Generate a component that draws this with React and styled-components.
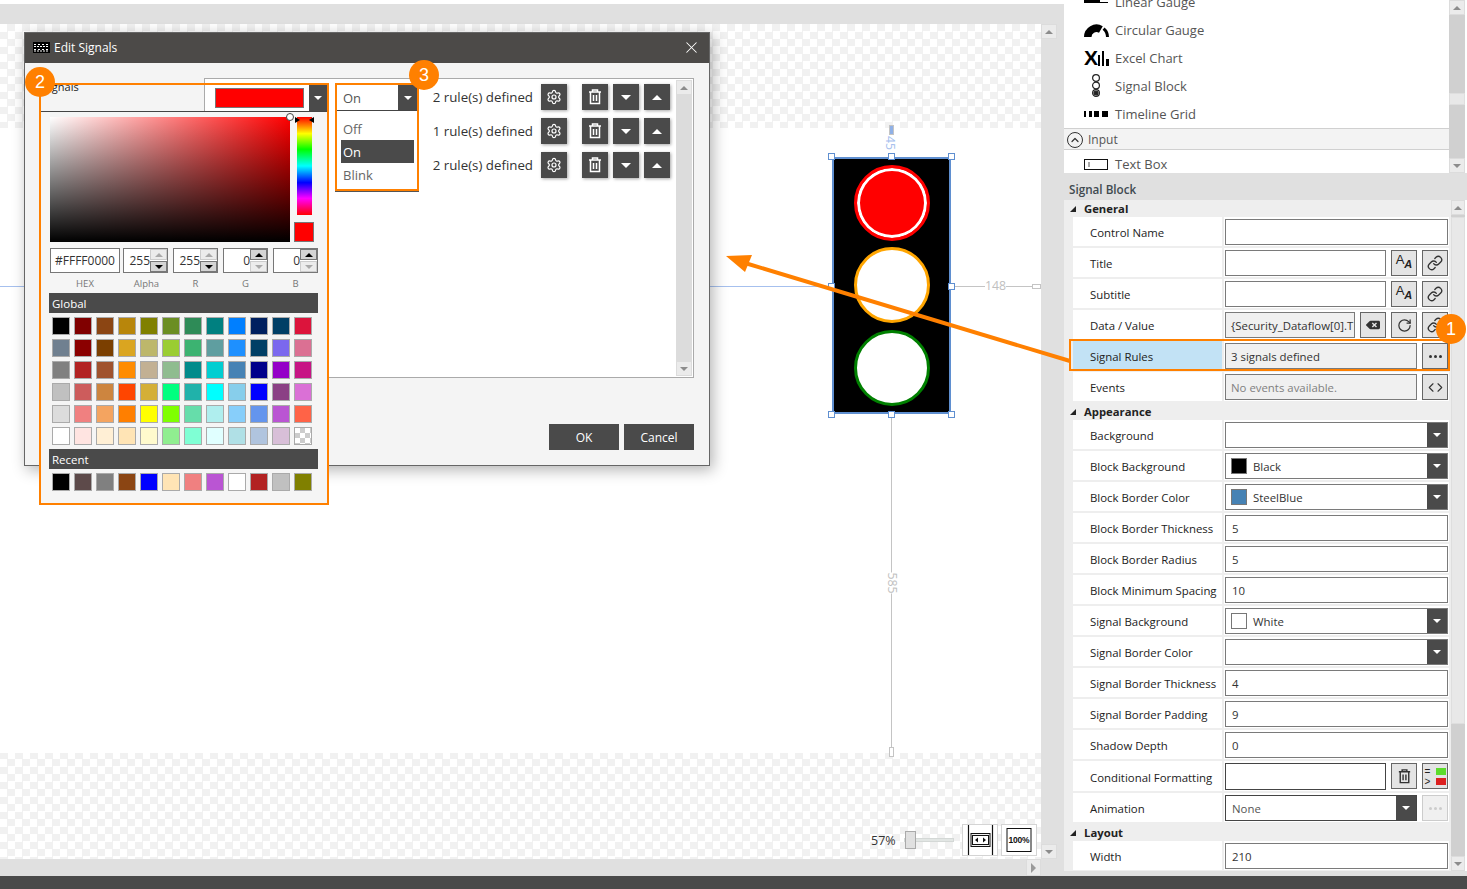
import React from 'react';
import styled, {createGlobalStyle} from 'styled-components';
import {Settings, Link, RotateCw, Code, ChevronUp, X} from 'lucide-react';
import {FaBackspace} from 'react-icons/fa';

const ORANGE = '#ff8000';
const DARK = '#4a4a4a';
const FONT = '"Open Sans", "Noto Sans", sans-serif';

const GlobalStyle = createGlobalStyle`
    html, body { margin: 0; padding: 0; background: #fff; }
    body { font-family: ${FONT}; font-size: 11.4px; color: #222; overflow: hidden; }
    * { box-sizing: border-box; }
`;

const checker = `repeating-conic-gradient(#f1f1f1 0 25%, #fff 0 50%) 0 0 / 15px 15px`;

const Page = styled.div`
    position: relative;
    width: 1467px;
    height: 889px;
    display: flex;
    flex-direction: column;
    overflow: hidden;
`;
const Workspace = styled.div`
    display: flex;
    height: 876px;
`;
const Footer = styled.div`
    height: 13px;
    background: ${DARK};
`;

/* left designer area */
const LeftPane = styled.div`
    width: 1064px;
    background: #e0e0e0;
    border-top: 4px solid #fff;
    padding-top: 20px;
    display: grid;
    grid-template-columns: 1041px 16px;
    grid-template-rows: 835px 17px;
`;
const Canvas = styled.div`
    position: relative;
    overflow: hidden;
    background: ${checker};
    padding-top: 104px;
`;
const Sheet = styled.div`
    height: 625px;
    background: #fff;
`;
const HLine = styled.div`
    position: absolute;
    left: ${p => p.$x}px;
    top: ${p => p.$y}px;
    width: ${p => p.$w}px;
    height: 1px;
    background: ${p => p.$color};
`;
const VLine = styled.div`
    position: absolute;
    left: ${p => p.$x}px;
    top: ${p => p.$y}px;
    width: 1px;
    height: ${p => p.$h}px;
    background: #c4c4c4;
`;
const Cap = styled.div`
    position: absolute;
    left: ${p => p.$x}px;
    top: ${p => p.$y}px;
    width: ${p => p.$w}px;
    height: ${p => p.$h}px;
    border: 1px solid #c4c4c4;
    background: ${p => p.$fill || '#fff'};
`;
const Measure = styled.span`
    position: absolute;
    left: ${p => p.$x}px;
    top: ${p => p.$y}px;
    font-size: 12.3px;
    line-height: 14px;
    color: ${p => p.$color || '#c0c0c0'};
    background: #fff;
    transform: ${p => (p.$turn ? `rotate(${p.$turn}deg)` : 'none')};
`;
const SignalBlock = styled.div`
    position: absolute;
    left: 832px;
    top: 133px;
    width: 119px;
    height: 257px;
    background: #000;
    border: 2px solid #5f8fd0;
    padding-top: 6px;
    display: flex;
    flex-direction: column;
    align-items: center;
    gap: 6px;
`;
const Lamp = styled.div`
    width: 76px;
    height: 76px;
    margin-top: ${p => p.$nudge || 0}px;
    border-radius: 50%;
    background: ${p => p.$fill};
    border: 3px solid ${p => p.$ring};
    box-shadow: ${p => (p.$inner ? `inset 0 0 0 3px ${p.$inner}` : 'none')};
`;
const Handle = styled.div`
    position: absolute;
    left: ${p => p.$x}px;
    top: ${p => p.$y}px;
    width: 7px;
    height: 7px;
    background: #fff;
    border: 1px solid #5f8fd0;
`;
const ZoomBar = styled.div`
    position: absolute;
    left: 871px;
    top: 800px;
    display: flex;
    align-items: center;
    height: 32px;
`;
const ZoomLabel = styled.span`
    width: 33px;
    font-size: 12.5px;
    color: #333;
`;
const SliderTrack = styled.div`
    position: relative;
    width: 50px;
    height: 4px;
    background: #e2e6e4;
    border: 1px solid #d4d8d6;
    margin-right: 8px;
`;
const SliderThumb = styled.div`
    position: absolute;
    left: 0;
    top: -8px;
    width: 11px;
    height: 18px;
    background: #e0e0e0;
    border: 1px solid #aaa;
`;
const ZoomButton = styled.div`
    width: 36px;
    height: 32px;
    margin-right: 3px;
    background: #fff;
    border: 1px solid #d4d4d4;
    display: flex;
    align-items: center;
    justify-content: center;
    position: relative;
`;
const HundredText = styled.span`
    position: absolute;
    left: 0;
    right: 0;
    top: 9px;
    text-align: center;
    font-family: "Liberation Sans", sans-serif;
    font-size: 8.5px;
    line-height: 12px;
    font-weight: 700;
    letter-spacing: -0.2px;
    color: #111;
`;

/* scrollbars */
const ScrollBar = styled.div`
    display: flex;
    flex-direction: ${p => (p.$horizontal ? 'row' : 'column')};
    justify-content: ${p => (p.$horizontal ? 'flex-end' : 'flex-start')};
    width: ${p => (p.$horizontal ? 'auto' : `${p.$size || 16}px`)};
    background: ${p => p.$track || '#d0d0d0'};
    flex-shrink: 0;
`;
const ScrollArrow = styled.div`
    width: ${p => (p.$horizontal ? '15px' : 'auto')};
    height: ${p => (p.$horizontal ? 'auto' : '15px')};
    background: #ebebeb;
    border: 1px solid #dcdcdc;
    display: flex;
    align-items: center;
    justify-content: center;
    flex-shrink: 0;
`;
const ScrollThumb = styled.div`
    margin-top: ${p => p.$top}px;
    height: ${p => p.$height}px;
    background: #e8e8e8;
    border: 1px solid #dedede;
`;
const ScrollFill = styled.div`
    flex: 1;
`;
const Tri = styled.span`
    display: block;
    width: 0;
    height: 0;
    border-left: ${p => p.$size || 4}px solid transparent;
    border-right: ${p => p.$size || 4}px solid transparent;
    ${p => (p.$up ? 'border-bottom' : 'border-top')}: ${p => (p.$size || 4)}px solid ${p => p.$color || '#8c8c8c'};
`;
const TriRight = styled.span`
    display: block;
    width: 0;
    height: 0;
    border-top: 5px solid transparent;
    border-bottom: 5px solid transparent;
    border-left: 5px solid #9a9a9a;
`;

/* right panels */
const RightPane = styled.div`
    width: 403px;
    background: #e0e0e0;
    display: flex;
    flex-direction: column;
`;
const Toolbox = styled.div`
    height: 173px;
    display: flex;
    background: #fff;
    padding-right: 2px;
`;
const ToolList = styled.div`
    width: 385px;
    overflow: hidden;
`;
const ToolListInner = styled.div`
    margin-top: -12px;
`;
const ToolRow = styled.div`
    height: 28px;
    padding-left: 20px;
    display: flex;
    align-items: center;
    font-size: 13px;
    color: #555;
`;
const ToolIcon = styled.span`
    width: 31px;
    padding-left: ${p => p.$indent || 0}px;
    display: flex;
    align-items: center;
    font-family: "Liberation Sans", sans-serif;
    font-size: 21px;
    font-weight: 700;
    color: #000;
`;
const GroupRow = styled.div`
    height: 22px;
    padding: 1px 0 0 3px;
    background: #f3f3f3;
    border-top: 1px solid #d0d0d0;
    border-bottom: 1px solid #d0d0d0;
    display: flex;
    align-items: center;
    gap: 5px;
    font-size: 12px;
    color: #555;
`;
const CircleUp = styled.span`
    width: 16px;
    height: 16px;
    border: 1px solid #333;
    border-radius: 50%;
    display: flex;
    align-items: center;
    justify-content: center;
    color: #333;
`;
const PanelTitle = styled.div`
    height: 27px;
    padding: 4px 0 0 5px;
    display: flex;
    align-items: center;
    font-size: 11.7px;
    font-weight: 600;
    color: #404a50;
`;
const PropArea = styled.div`
    height: 671px;
    display: flex;
    background: #fff;
`;
const PropGrid = styled.div`
    width: 387px;
    padding-right: 2px;
    background: #eee;
    overflow: hidden;
`;
const Section = styled.div`
    height: 17px;
    display: flex;
    align-items: center;
    padding-left: 6px;
    gap: 8px;
    font-size: 11.3px;
    font-weight: 700;
    color: #222;
`;
const SectionMark = styled.span`
    width: 0;
    height: 0;
    border-left: 6px solid transparent;
    border-bottom: 6px solid #222;
`;
const PropRow = styled.div`
    height: ${p => (p.$tall ? 30 : 29)}px;
    margin-bottom: 2px;
    margin-left: 9px;
    display: flex;
    background: #eee;
`;
const PropLabel = styled.div`
    width: 149px;
    margin-right: 2px;
    padding: 2px 0 0 17px;
    display: flex;
    align-items: center;
    background: ${p => (p.$active ? '#c2e2f5' : '#fff')};
    color: #222;
    white-space: nowrap;
`;
const PropValue = styled.div`
    flex: 1;
    background: #fff;
    padding: 2px 1px 1px 1px;
    display: flex;
    gap: 5px;
`;
const Field = styled.div`
    flex: 1;
    min-width: 0;
    height: ${p => (p.$tall ? 27 : 26)}px;
    padding-left: ${p => (p.$inset ? 5 : 6)}px;
    border: 1px solid ${p => (p.$strong ? '#444' : '#7a7a7a')};
    background: ${p => p.$fill || '#fff'};
    color: ${p => p.$color || '#333'};
    display: flex;
    align-items: center;
    white-space: nowrap;
    overflow: hidden;
`;
const Swatch = styled.span`
    width: 16px;
    height: 16px;
    margin-right: 6px;
    flex-shrink: 0;
    background: ${p => p.$color};
    border: 1px solid #777;
`;
const SelectText = styled.span`
    flex: 1;
`;
const DropBtn = styled.span`
    width: ${p => p.$w || 20}px;
    height: 100%;
    flex-shrink: 0;
    background: ${DARK};
    display: flex;
    align-items: center;
    justify-content: center;
`;
const IconBtn = styled.div`
    width: 26px;
    height: 26px;
    flex-shrink: 0;
    background: ${p => (p.$disabled ? '#f0f0f0' : '#e4e4e4')};
    border: 1px solid ${p => (p.$disabled ? '#ccc' : '#666')};
    color: ${p => (p.$disabled ? '#ccc' : '#333')};
    display: flex;
    align-items: center;
    justify-content: center;
    gap: 2px;
`;
const Dot = styled.i`
    width: 3px;
    height: 3px;
    border-radius: 50%;
    background: currentColor;
`;
const GlyphPair = styled.span`
    display: flex;
    font-family: "Liberation Sans", sans-serif;
    color: #222;
`;
const BigA = styled.span`
    font-size: 13px;
    line-height: 13px;
    margin-top: -3px;
`;
const SmallA = styled.span`
    font-size: 11px;
    line-height: 11px;
    margin-top: 3px;
    font-style: italic;
    font-weight: 700;
`;
const RuleGrid = styled.div`
    display: grid;
    grid-template-columns: 9px 10px;
    column-gap: 2px;
    row-gap: 3px;
    align-items: center;
    font-family: "Liberation Sans", sans-serif;
    font-size: 10px;
    line-height: 7px;
    color: #222;
`;
const RuleChip = styled.i`
    height: 7px;
    background: ${p => p.$color};
`;

/* dialog */
const Dialog = styled.div`
    position: absolute;
    left: 24px;
    top: 32px;
    width: 686px;
    height: 434px;
    background: #f4f4f4;
    border: 1px solid #666;
    box-shadow: 3px 4px 14px rgba(0, 0, 0, 0.3);
`;
const DialogTitle = styled.div`
    height: 30px;
    background: #4c4a48;
    color: #fff;
    font-size: 12px;
    display: flex;
    align-items: center;
    padding: 0 8px 1px 8px;
    gap: 4px;
`;
const DialogTitleText = styled.span`
    flex: 1;
`;
const DialogBody = styled.div`
    padding: 15px 15px 0 18px;
`;
const TableRow = styled.div`
    display: flex;
`;
const SignalsLabel = styled.div`
    width: 161px;
    font-size: 11px;
    line-height: 18px;
    color: #222;
`;
const SignalsTable = styled.div`
    width: 490px;
    height: 300px;
    padding: 1px;
    background: #fff;
    border: 1px solid #aaa;
    display: flex;
`;
const SignalRows = styled.div`
    flex: 1;
    padding: 4px 6px 0 0;
    display: flex;
    flex-direction: column;
    gap: 8px;
`;
const SignalRow = styled.div`
    display: flex;
    justify-content: flex-end;
    align-items: center;
    height: 26px;
    gap: 5px;
`;
const RuleText = styled.span`
    font-size: 13.3px;
    color: #333;
    margin-right: 3px;
`;
const DarkBtn = styled.div`
    width: 26px;
    height: 26px;
    margin-right: ${p => p.$after || 0}px;
    background: ${DARK};
    color: #fff;
    display: flex;
    align-items: center;
    justify-content: center;
    box-shadow: 1px 1px 3px rgba(0, 0, 0, 0.35);
`;
const DialogFooter = styled.div`
    margin-top: 46px;
    display: flex;
    justify-content: flex-end;
    gap: 5px;
`;
const FooterBtn = styled.div`
    width: 70px;
    height: 26px;
    background: ${DARK};
    color: #fff;
    font-size: 12px;
    display: flex;
    align-items: center;
    justify-content: center;
`;

/* colour picker popup */
const PickerPopup = styled.div`
    position: absolute;
    left: 14px;
    top: 50px;
    width: 290px;
    height: 422px;
    border: 2px solid ${ORANGE};
    display: flex;
    flex-direction: column;
`;
const ColorCombo = styled.div`
    align-self: flex-end;
    width: 116px;
    height: 26px;
    padding: 3px 0 3px 4px;
    background: #fff;
    display: flex;
    flex-shrink: 0;
`;
const ComboColor = styled.div`
    width: 89px;
    background: #f00;
    border: 1px solid #777;
`;
const ComboDrop = styled.div`
    margin: -3px 0 -3px 5px;
    flex: 1;
    background: ${DARK};
    display: flex;
    align-items: center;
    justify-content: center;
`;
const PickerPanel = styled.div`
    flex: 1;
    background: #f5f5f5;
    border-top: 1px solid #444;
    padding: 5px 9px 0 8px;
`;
const PickerTop = styled.div`
    display: flex;
    gap: 4px;
    margin-left: 1px;
`;
const SvSquare = styled.div`
    width: 240px;
    height: 125px;
    background: linear-gradient(to bottom, rgba(0,0,0,0), #000), linear-gradient(to right, #fff, #f00);
    position: relative;
`;
const SvMarker = styled.span`
    position: absolute;
    right: -4px;
    top: -4px;
    width: 8px;
    height: 8px;
    border-radius: 50%;
    border: 1px solid #444;
    background: #fff;
`;
const HueCol = styled.div`
    width: 20px;
    display: flex;
    flex-direction: column;
    align-items: center;
    gap: 7px;
`;
const HueBar = styled.div`
    position: relative;
    width: 15px;
    height: 98px;
    background: linear-gradient(to bottom, #f00, #ff0 17%, #0f0 33%, #0ff 50%, #00f 67%, #f0f 83%, #f00);
`;
const HueMark = styled.span`
    position: absolute;
    top: 0;
    ${p => (p.$right ? 'right: -2px;' : 'left: -2px;')}
    width: 0;
    height: 0;
    border-top: 3px solid transparent;
    border-bottom: 3px solid transparent;
    ${p => (p.$right ? 'border-right' : 'border-left')}: 5px solid #000;
`;
const CurrentColor = styled.div`
    width: 20px;
    height: 20px;
    background: #f00;
    border: 1px solid #777;
`;
const ValueRow = styled.div`
    margin: 6px 0 0 1px;
    display: grid;
    grid-template-columns: 68px 45px 45px 45px 45px;
    column-gap: 5px;
    height: 25px;
`;
const ValueBox = styled.div`
    margin-right: ${p => (p.$wide ? -2 : 0)}px;
    border: 1px solid #777;
    background: #fff;
    display: flex;
    align-items: center;
    font-size: 12px;
    color: #333;
    overflow: hidden;
`;
const ValueText = styled.span`
    flex: 1;
    text-align: ${p => (p.$center ? 'center' : 'right')};
    white-space: nowrap;
`;
const Spin = styled.div`
    width: 17px;
    height: 100%;
    display: flex;
    flex-direction: column;
    gap: 1px;
    background: #fff;
`;
const SpinBtn = styled.div`
    flex: 1;
    background: ${p => (p.$on ? '#d4d4d4' : '#ececec')};
    border: 1px solid ${p => (p.$on ? '#777' : '#ccc')};
    display: flex;
    align-items: center;
    justify-content: center;
`;
const CaptionRow = styled.div`
    margin: 4px 0 0 1px;
    display: grid;
    grid-template-columns: 70px 43px 45px 45px 45px;
    column-gap: 5px;
    height: 16px;
    font-size: 9.5px;
    line-height: 13px;
    color: #777;
    text-align: center;
`;
const PaletteTitle = styled.div`
    height: 20px;
    padding-left: 3px;
    background: ${DARK};
    color: #fff;
    font-size: 11.5px;
    display: flex;
    align-items: center;
`;
const Palette = styled.div`
    margin: 4px 0 4px 3px;
    display: grid;
    grid-template-columns: repeat(12, 18px);
    grid-auto-rows: 18px;
    gap: 4px;
`;
const PaletteCell = styled.div`
    background: ${p => (p.$empty ? `repeating-conic-gradient(#ccc 0 25%, #fff 0 50%) 0 0 / 10px 10px` : p.$color)};
    border: 1px solid #aaa;
`;

/* state dropdown */
const StatePopup = styled.div`
    position: absolute;
    left: 310px;
    top: 50px;
    width: 84px;
    height: 108px;
    border: 2px solid ${ORANGE};
    background: #fff;
    box-shadow: 0 1px 0 #555;
    font-size: 13px;
    color: #555;
`;
const StateHead = styled.div`
    height: 26px;
    display: flex;
    align-items: center;
    padding-left: 6px;
    border-bottom: 1px solid #444;
`;
const StateHeadText = styled.span`
    flex: 1;
`;
const StateList = styled.div`
    padding: 6px 3px 0 4px;
`;
const StateItem = styled.div`
    height: 23px;
    padding-left: 2px;
    display: flex;
    align-items: center;
    background: ${p => (p.$on ? DARK : 'transparent')};
    color: ${p => (p.$on ? '#fff' : '#666')};
`;

/* callouts */
const Badge = styled.div`
    position: absolute;
    left: ${p => p.$x - 15}px;
    top: ${p => p.$y - 15}px;
    width: 30px;
    height: 30px;
    border-radius: 50%;
    background: ${ORANGE};
    color: #fff;
    font-family: "Liberation Sans", sans-serif;
    font-size: 18px;
    display: flex;
    align-items: center;
    justify-content: center;
`;
const RulesOutline = styled.div`
    position: absolute;
    left: 1069px;
    top: 339px;
    width: 381px;
    height: 32px;
    border: 2px solid ${ORANGE};
`;
const ArrowSvg = styled.svg`
    position: absolute;
    left: 0;
    top: 0;
    pointer-events: none;
`;

const GLOBAL_COLORS = [
    '#000000', '#800000', '#8b4513', '#b8860b', '#808000', '#6b8e23', '#2e8b57', '#008080', '#007fff', '#002060', '#003f66', '#dc143c',
    '#708090', '#8b0000', '#7b3f00', '#daa520', '#bdb76b', '#9acd32', '#3cb371', '#5f9ea0', '#1e90ff', '#003f66', '#7b68ee', '#db7093',
    '#808080', '#b22222', '#a0522d', '#ff8c00', '#c2b093', '#8fbc8f', '#008b8b', '#00ced1', '#4682b4', '#00008b', '#9400c8', '#c71585',
    '#c0c0c0', '#cd5c5c', '#cd853f', '#ff4500', '#d4af37', '#00ff7f', '#20b2aa', '#00ffff', '#87ceeb', '#0000ff', '#8b4085', '#da70d6',
    '#dcdcdc', '#f08080', '#f4a460', '#ff7f00', '#ffff00', '#7fff00', '#66ddaa', '#afeeee', '#87cefa', '#6495ed', '#ba55d3', '#ff6347',
    '#ffffff', '#ffe4e1', '#ffefd5', '#ffe4b5', '#fffacd', '#90ee90', '#7fffd4', '#e0ffff', '#b0e0e6', '#b0c4de', '#d8bfd8', null,
];
const RECENT_COLORS = ['#000000', '#5d4a4a', '#808080', '#8b4513', '#0000ff', '#ffe4b5', '#f08080', '#ba55d3', '#ffffff', '#b22222', '#c0c0c0', '#808000'];

const TrashIcon = ({size = 18}) => (
    <svg width={size} height={size} viewBox="0 0 18 18" fill="none" stroke="currentColor" strokeWidth="1.5">
        <path d="M3 4h12M6.5 4V2h5v2M4.5 4v11.5h9V4M7.5 7v6M10.5 7v6" />
    </svg>
);

const LinkBtn = () => <IconBtn><Link size={16} strokeWidth={2} /></IconBtn>;
const TextStyleBtn = () => <IconBtn><GlyphPair><BigA>A</BigA><SmallA>A</SmallA></GlyphPair></IconBtn>;
const Caret = () => <Tri $color="#fff" $size={4} />;

const PropField = ({label, value}) => (
    <PropRow>
        <PropLabel>{label}</PropLabel>
        <PropValue>
            <Field>{value}</Field>
        </PropValue>
    </PropRow>
);

const PropSelect = ({label, value, swatch}) => (
    <PropRow>
        <PropLabel>{label}</PropLabel>
        <PropValue>
            <Field $inset>
                {swatch && <Swatch $color={swatch} />}
                <SelectText>{value}</SelectText>
                <DropBtn><Caret /></DropBtn>
            </Field>
        </PropValue>
    </PropRow>
);

const SectionHead = ({children}) => <Section><SectionMark />{children}</Section>;

const SpinValue = ({value, upOn, downOn}) => (
    <ValueBox>
        <ValueText>{value}</ValueText>
        <Spin>
            <SpinBtn $on={upOn}><Tri $up $size={4} $color={upOn ? '#000' : '#aaa'} /></SpinBtn>
            <SpinBtn $on={downOn}><Tri $size={4} $color={downOn ? '#000' : '#aaa'} /></SpinBtn>
        </Spin>
    </ValueBox>
);

const VScroll = ({size, track, thumbTop, thumbHeight}) => (
    <ScrollBar $size={size} $track={track}>
        <ScrollArrow><Tri $up /></ScrollArrow>
        {thumbHeight ? <ScrollThumb $top={thumbTop} $height={thumbHeight} /> : null}
        <ScrollFill />
        <ScrollArrow><Tri /></ScrollArrow>
    </ScrollBar>
);

const GaugeIcon = () => (
    <svg width="25" height="15" viewBox="0 0 25 15" fill="none">
        <path d="M3.75 14A8.75 8.75 0 0 1 16.875 6.42" stroke="#000" strokeWidth="7.5" />
        <path d="M19.57 5.57A11 11 0 0 1 23.5 14" stroke="#000" strokeWidth="3" />
    </svg>
);
const ExcelBars = () => (
    <svg width="11" height="15" viewBox="0 0 11 15" fill="#000">
        <rect x="0" y="4" width="2" height="11" />
        <rect x="4" y="0" width="2" height="15" />
        <rect x="8" y="8" width="3" height="7" />
    </svg>
);
const SignalIcon = () => (
    <svg width="12" height="24" viewBox="0 0 12 24" fill="none" stroke="#222" strokeWidth="1.2">
        <circle cx="6" cy="4" r="3.4" />
        <circle cx="6" cy="11.5" r="3.4" />
        <circle cx="6" cy="19" r="3.4" />
        <circle cx="6" cy="19" r="2" fill="#222" />
    </svg>
);
const TimelineIcon = () => (
    <svg width="24" height="6" viewBox="0 0 24 6" fill="#000">
        <rect x="0" y="0" width="2" height="6" />
        <rect x="5" y="0" width="3" height="6" />
        <rect x="10" y="0" width="5" height="6" />
        <rect x="18" y="0" width="6" height="6" />
    </svg>
);
const TextBoxIcon = () => (
    <svg width="24" height="11" viewBox="0 0 24 11" fill="none" stroke="#111">
        <rect x="0.5" y="0.5" width="23" height="10" />
        <path d="M5 3v5" stroke="#555" />
    </svg>
);
const LinearIcon = () => (
    <svg width="24" height="5" viewBox="0 0 24 5" fill="#000">
        <rect x="0" y="0" width="16" height="3" />
        <rect x="16" y="2" width="8" height="1" />
    </svg>
);
const LogoIcon = () => (
    <svg width="17" height="11" viewBox="0 0 17 11">
        <rect width="17" height="11" fill="#000" />
        <path d="M1 2.5h3M5 2.5h3M9 2.5h3M13 2.5h3M1 4.5h15M1 7.5h3M5 7.5h3M9 7.5h3M13 7.5h3M1 9h15" stroke="#fff" strokeWidth="1" strokeDasharray="2 1" />
    </svg>
);
const FitIcon = () => (
    <svg width="34" height="30" viewBox="0 0 34 30" fill="none" stroke="#111">
        <path d="M5.5 0v30M29.5 0v30" strokeWidth="1.2" />
        <rect x="8" y="8.5" width="19" height="13" fill="#f0f0f0" />
        <rect x="9.5" y="10.5" width="16" height="9" fill="#fff" />
        <path d="M12 15l3-2.5v5zM23 15l-3-2.5v5z" fill="#111" stroke="none" />
    </svg>
);
const HundredLines = () => (
    <svg width="26" height="26" viewBox="0 0 26 26" fill="none" stroke="#111">
        <path d="M1 1.5h24M1 24.5h24M1 1v24M25 1v24" />
    </svg>
);

const App = () => (
    <Page>
        <GlobalStyle />
        <Workspace>
            <LeftPane>
                <Canvas>
                    <Sheet />
                    <HLine $x={0} $y={262} $w={832} $color="#a6c0ee" />
                    <Cap $x={889} $y={101} $w={5} $h={10} $fill="#8fb0e6" />
                    <Measure $x={883} $y={112} $color="#a6c0ee" $turn={90}>45</Measure>
                    <HLine $x={951} $y={262} $w={34} $color="#c4c4c4" />
                    <Measure $x={985} $y={255}>148</Measure>
                    <HLine $x={1006} $y={262} $w={26} $color="#c4c4c4" />
                    <Cap $x={1032} $y={260} $w={9} $h={5} />
                    <VLine $x={891} $y={393} $h={330} />
                    <Cap $x={889} $y={723} $w={5} $h={10} />
                    <Measure $x={881} $y={552} $turn={90}>585</Measure>
                    <SignalBlock>
                        <Lamp $fill="#f00" $ring="#f00" $inner="#fff" />
                        <Lamp $fill="#fff" $ring="#ffa500" />
                        <Lamp $fill="#fff" $ring="#008000" $nudge={1} />
                        <Handle $x={-6} $y={-6} />
                        <Handle $x={54} $y={-6} />
                        <Handle $x={114} $y={-6} />
                        <Handle $x={-6} $y={124} />
                        <Handle $x={114} $y={124} />
                        <Handle $x={-6} $y={252} />
                        <Handle $x={54} $y={252} />
                        <Handle $x={114} $y={252} />
                    </SignalBlock>
                    <ZoomBar>
                        <ZoomLabel>57%</ZoomLabel>
                        <SliderTrack><SliderThumb /></SliderTrack>
                        <ZoomButton><FitIcon /></ZoomButton>
                        <ZoomButton><HundredLines /><HundredText>100%</HundredText></ZoomButton>
                    </ZoomBar>
                </Canvas>
                <VScroll size={16} track="#e0e0e0" />
                <ScrollBar $horizontal $track="#e0e0e0">
                    <ScrollArrow $horizontal><TriRight /></ScrollArrow>
                </ScrollBar>
            </LeftPane>

            <RightPane>
                <Toolbox>
                    <ToolList>
                        <ToolListInner>
                            <ToolRow><ToolIcon><LinearIcon /></ToolIcon>Linear Gauge</ToolRow>
                            <ToolRow><ToolIcon><GaugeIcon /></ToolIcon>Circular Gauge</ToolRow>
                            <ToolRow><ToolIcon>X<ExcelBars /></ToolIcon>Excel Chart</ToolRow>
                            <ToolRow><ToolIcon $indent={6}><SignalIcon /></ToolIcon>Signal Block</ToolRow>
                            <ToolRow><ToolIcon><TimelineIcon /></ToolIcon>Timeline Grid</ToolRow>
                            <GroupRow><CircleUp><ChevronUp size={12} strokeWidth={2.4} /></CircleUp>Input</GroupRow>
                            <ToolRow><ToolIcon><TextBoxIcon /></ToolIcon>Text Box</ToolRow>
                        </ToolListInner>
                    </ToolList>
                    <VScroll size={16} thumbTop={78} thumbHeight={12} />
                </Toolbox>

                <PanelTitle>Signal Block</PanelTitle>

                <PropArea>
                    <PropGrid>
                        <SectionHead>General</SectionHead>
                        <PropField label="Control Name" />
                        <PropRow>
                            <PropLabel>Title</PropLabel>
                            <PropValue><Field /><TextStyleBtn /><LinkBtn /></PropValue>
                        </PropRow>
                        <PropRow>
                            <PropLabel>Subtitle</PropLabel>
                            <PropValue><Field /><TextStyleBtn /><LinkBtn /></PropValue>
                        </PropRow>
                        <PropRow>
                            <PropLabel>Data / Value</PropLabel>
                            <PropValue>
                                <Field $inset $fill="#f0f0f0">{'{Security_Dataflow[0].T'}</Field>
                                <IconBtn><FaBackspace size={14} /></IconBtn>
                                <IconBtn><RotateCw size={15} strokeWidth={2} /></IconBtn>
                                <LinkBtn />
                            </PropValue>
                        </PropRow>
                        <PropRow>
                            <PropLabel $active>Signal Rules</PropLabel>
                            <PropValue>
                                <Field $inset $fill="#f0f0f0">3 signals defined</Field>
                                <IconBtn><Dot /><Dot /><Dot /></IconBtn>
                            </PropValue>
                        </PropRow>
                        <PropRow>
                            <PropLabel>Events</PropLabel>
                            <PropValue>
                                <Field $inset $fill="#f0f0f0" $color="#808080">No events available.</Field>
                                <IconBtn><Code size={15} strokeWidth={1.8} /></IconBtn>
                            </PropValue>
                        </PropRow>
                        <SectionHead>Appearance</SectionHead>
                        <PropSelect label="Background" />
                        <PropSelect label="Block Background" value="Black" swatch="#000" />
                        <PropSelect label="Block Border Color" value="SteelBlue" swatch="#4682b4" />
                        <PropField label="Block Border Thickness" value="5" />
                        <PropField label="Block Border Radius" value="5" />
                        <PropField label="Block Minimum Spacing" value="10" />
                        <PropSelect label="Signal Background" value="White" swatch="#fff" />
                        <PropSelect label="Signal Border Color" />
                        <PropField label="Signal Border Thickness" value="4" />
                        <PropField label="Signal Border Padding" value="9" />
                        <PropField label="Shadow Depth" value="0" />
                        <PropRow $tall>
                            <PropLabel>Conditional Formatting</PropLabel>
                            <PropValue>
                                <Field $strong $tall />
                                <IconBtn><TrashIcon size={17} /></IconBtn>
                                <IconBtn>
                                    <RuleGrid>
                                        =<RuleChip $color="#5ddc2c" />
                                        &gt;<RuleChip $color="#dc2020" />
                                    </RuleGrid>
                                </IconBtn>
                            </PropValue>
                        </PropRow>
                        <PropRow>
                            <PropLabel>Animation</PropLabel>
                            <PropValue>
                                <Field $strong $color="#555">
                                    <SelectText>None</SelectText>
                                    <DropBtn><Caret /></DropBtn>
                                </Field>
                                <IconBtn $disabled><Dot /><Dot /><Dot /></IconBtn>
                            </PropValue>
                        </PropRow>
                        <SectionHead>Layout</SectionHead>
                        <PropField label="Width" value="210" />
                    </PropGrid>
                    <VScroll size={14} thumbTop={2} thumbHeight={507} />
                </PropArea>
            </RightPane>
        </Workspace>
        <Footer />

        <Dialog>
            <DialogTitle>
                <LogoIcon />
                <DialogTitleText>Edit Signals</DialogTitleText>
                <X size={19} strokeWidth={1.3} />
            </DialogTitle>
            <DialogBody>
                <TableRow>
                    <SignalsLabel>Signals</SignalsLabel>
                    <SignalsTable>
                        <SignalRows>
                            {[2, 1, 2].map((count, i) => (
                                <SignalRow key={i}>
                                    <RuleText>{count} rule(s) defined</RuleText>
                                    <DarkBtn $after={10}><Settings size={16} strokeWidth={1.8} /></DarkBtn>
                                    <DarkBtn><TrashIcon /></DarkBtn>
                                    <DarkBtn><Tri $color="#fff" $size={5} /></DarkBtn>
                                    <DarkBtn><Tri $up $color="#fff" $size={5} /></DarkBtn>
                                </SignalRow>
                            ))}
                        </SignalRows>
                        <VScroll size={16} track="#dcdcdc" />
                    </SignalsTable>
                </TableRow>
                <DialogFooter>
                    <FooterBtn>OK</FooterBtn>
                    <FooterBtn>Cancel</FooterBtn>
                </DialogFooter>
            </DialogBody>

            <PickerPopup>
                <ColorCombo>
                    <ComboColor />
                    <ComboDrop><Caret /></ComboDrop>
                </ColorCombo>
                <PickerPanel>
                    <PickerTop>
                        <SvSquare><SvMarker /></SvSquare>
                        <HueCol>
                            <HueBar><HueMark /><HueMark $right /></HueBar>
                            <CurrentColor />
                        </HueCol>
                    </PickerTop>
                    <ValueRow>
                        <ValueBox $wide><ValueText $center>#FFFF0000</ValueText></ValueBox>
                        <SpinValue value="255" downOn />
                        <SpinValue value="255" downOn />
                        <SpinValue value="0" upOn />
                        <SpinValue value="0" upOn />
                    </ValueRow>
                    <CaptionRow>
                        <span>HEX</span><span>Alpha</span><span>R</span><span>G</span><span>B</span>
                    </CaptionRow>
                    <PaletteTitle>Global</PaletteTitle>
                    <Palette>
                        {GLOBAL_COLORS.map((c, i) => <PaletteCell key={i} $color={c} $empty={!c} />)}
                    </Palette>
                    <PaletteTitle>Recent</PaletteTitle>
                    <Palette>
                        {RECENT_COLORS.map((c, i) => <PaletteCell key={i} $color={c} />)}
                    </Palette>
                </PickerPanel>
            </PickerPopup>

            <StatePopup>
                <StateHead>
                    <StateHeadText>On</StateHeadText>
                    <DropBtn $w={19}><Caret /></DropBtn>
                </StateHead>
                <StateList>
                    <StateItem>Off</StateItem>
                    <StateItem $on>On</StateItem>
                    <StateItem>Blink</StateItem>
                </StateList>
            </StatePopup>
        </Dialog>

        <RulesOutline />
        <ArrowSvg width="1467" height="889" viewBox="0 0 1467 889">
            <path d="M1070 361L745 263" stroke={ORANGE} strokeWidth="4" />
            <path d="M726 256L752 255L745 272Z" fill={ORANGE} />
        </ArrowSvg>
        <Badge $x={1451} $y={329}>1</Badge>
        <Badge $x={40} $y={82}>2</Badge>
        <Badge $x={424} $y={75}>3</Badge>
    </Page>
);

export default App;
